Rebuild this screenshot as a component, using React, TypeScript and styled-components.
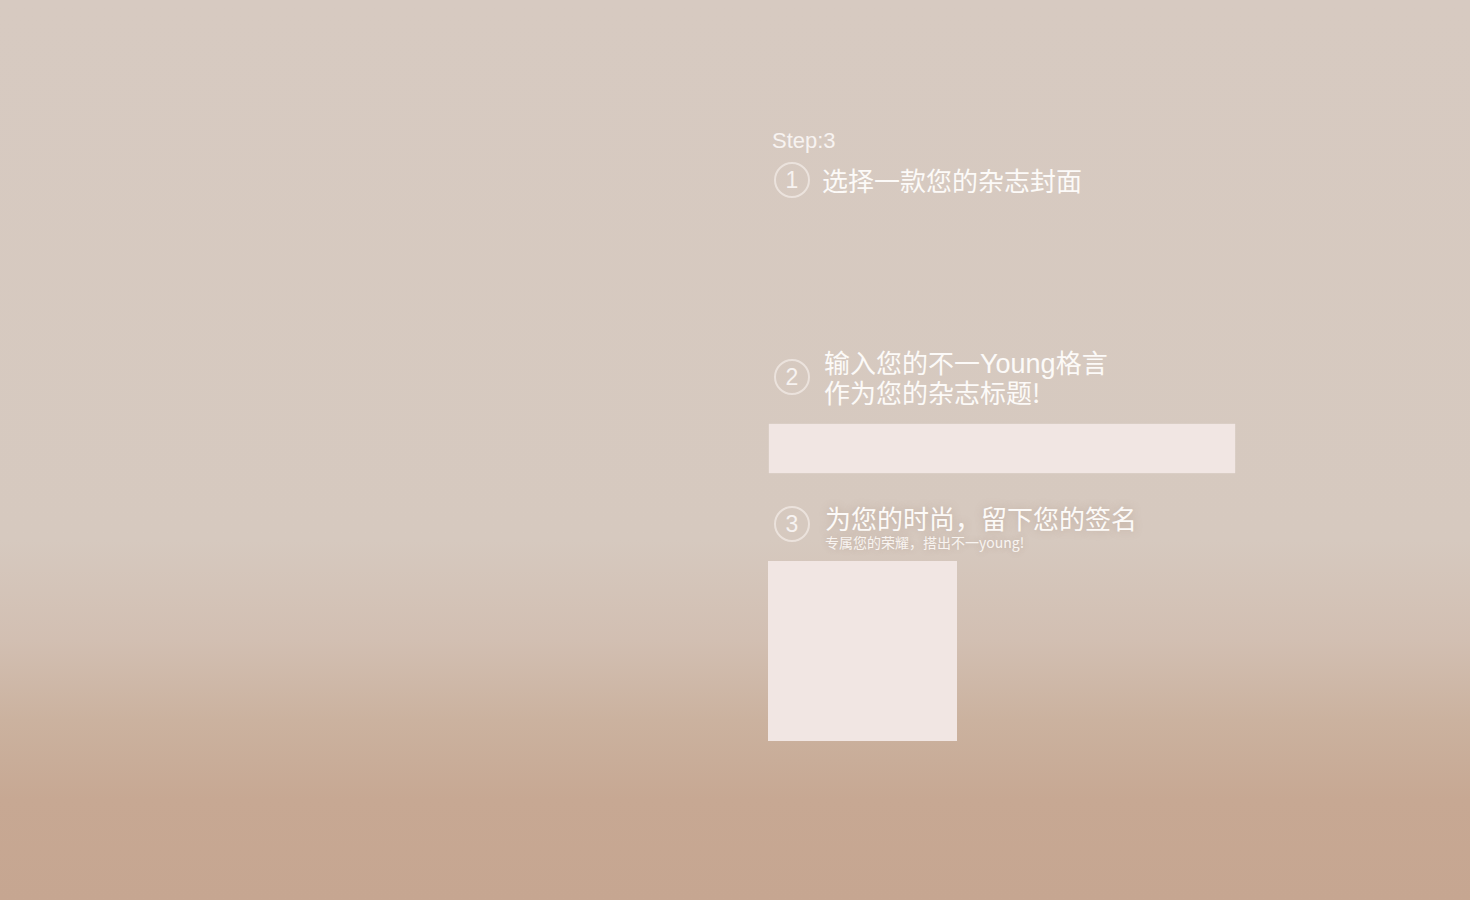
import React from "react";
import styled, { createGlobalStyle } from "styled-components";

const Global = createGlobalStyle`
  html, body { margin: 0; padding: 0; }
  body { font-family: "Liberation Sans", "Noto Sans CJK SC", sans-serif; }
  * { box-sizing: border-box; }
`;

const Page = styled.div`
  width: 1470px;
  height: 900px;
  overflow: hidden;
  background: linear-gradient(
    to bottom,
    #d7cac1 0px,
    #d6c9bf 540px,
    #d2bfb2 640px,
    #cbb29f 720px,
    #c7a893 800px,
    #c6a691 900px
  );
  display: flex;
`;

const Panel = styled.div`
  margin-left: 768px;
  padding-top: 128px;
  display: flex;
  flex-direction: column;
  width: 470px;
`;

const StepLabel = styled.div`
  font-size: 22px;
  line-height: 26px;
  color: #f7f3f1;
  padding-left: 4px;
`;

const Row = styled.div<{ $top: number; $gap: number }>`
  display: flex;
  align-items: center;
  margin-top: ${(p) => p.$top}px;
  padding-left: 6px;
  gap: ${(p) => p.$gap}px;
`;

const Circle = styled.div<{ $shift?: number }>`
  width: 36px;
  height: 36px;
  border-radius: 50%;
  border: 2px solid rgba(240, 232, 227, 0.8);
  display: flex;
  align-items: center;
  justify-content: center;
  font-size: 23px;
  color: #f7f3f1;
  flex: none;
  align-self: ${(p) => (p.$shift !== undefined ? "flex-start" : "center")};
  margin-top: ${(p) => p.$shift ?? 0}px;
`;

const Title = styled.div<{ $glow?: boolean }>`
  font-family: "Noto Sans CJK SC", "Liberation Sans", sans-serif;
  font-size: 26px;
  line-height: 30px;
  color: #fcfaf8;
  font-weight: 400;
  text-shadow: ${(p) => (p.$glow ? "0 0 8px rgba(150, 115, 95, 0.35)" : "none")};
`;

const Line = styled.div`
  height: 30px;
  white-space: nowrap;
`;

const Latin = styled.span`
  font-family: "Liberation Sans", sans-serif;
  font-size: 27px;
  line-height: 1;
`;

const TitleBlock = styled.div`
  display: flex;
  flex-direction: column;
`;

const Sub = styled.div`
  font-family: "Noto Sans CJK SC", "Liberation Sans", sans-serif;
  font-size: 14px;
  line-height: 14px;
  color: #f8f4f1;
  margin-top: 2px;
  text-shadow: 0 0 6px rgba(150, 115, 95, 0.3);
`;

const InputBox = styled.div`
  margin-top: 17px;
  margin-left: 1px;
  width: 466px;
  height: 49px;
  background: #f1e6e3;
  box-shadow: 0 0 1px rgba(255, 255, 255, 0.6);
`;

const SignBox = styled.div`
  margin-top: 12px;
  width: 189px;
  height: 180px;
  background: #f1e6e3;
`;

export default function App() {
  return (
    <>
      <Global />
      <Page>
        <Panel>
          <StepLabel>Step:3</StepLabel>
          <Row $top={8} $gap={12}>
            <Circle>1</Circle>
            <Title>选择一款您的杂志封面</Title>
          </Row>
          <Row $top={149} $gap={14}>
            <Circle>2</Circle>
            <Title>
              <Line>
                输入您的不一<Latin>Young</Latin>格言
              </Line>
              <Line>作为您的杂志标题!</Line>
            </Title>
          </Row>
          <InputBox />
          <Row $top={30} $gap={15}>
            <Circle $shift={3}>3</Circle>
            <TitleBlock>
              <Title $glow>为您的时尚，留下您的签名</Title>
              <Sub>专属您的荣耀，搭出不一young!</Sub>
            </TitleBlock>
          </Row>
          <SignBox />
        </Panel>
      </Page>
    </>
  );
}
